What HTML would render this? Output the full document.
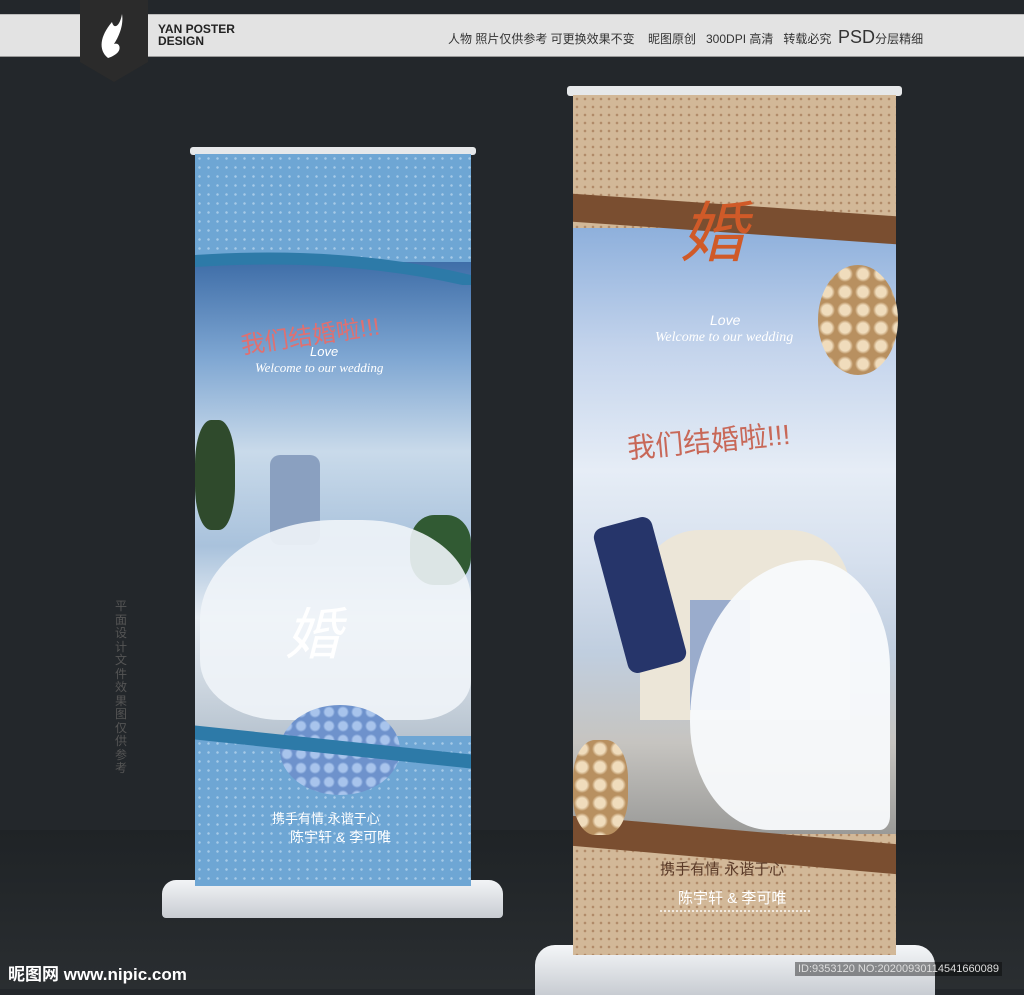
<!DOCTYPE html>
<html><head><meta charset="utf-8"><style>
*{margin:0;padding:0;box-sizing:border-box}
body{width:1024px;height:989px;overflow:hidden;background:#23272b;font-family:"Liberation Sans","Noto Sans CJK SC",sans-serif;position:relative}
.a{position:absolute}
</style></head><body>
<div class="a" style="left:0;top:830px;width:1024px;height:159px;background:linear-gradient(#1f2326,#2a2e31)"></div>
<div class="a" style="left:0;top:14px;width:1024px;height:43px;background:#e3e3e3;border-top:1px solid #bbb;border-bottom:1px solid #999"></div>
<svg class="a" style="left:80px;top:0" width="70" height="84"><polygon points="0,0 68,0 68,62 34,82 0,62" fill="#2b2b2b"/><path d="M28 58c-10-8-8-22 4-36 2 8 8 4 10-8 2 12-4 24-8 30 6-2 8 6 2 10-4 3-8 4-8 4z" fill="#fff"/></svg>
<div class="a" style="left:158px;top:23px;font-size:12px;font-weight:bold;color:#222;line-height:12px">YAN POSTER<br>DESIGN</div>
<div class="a" style="left:448px;top:27px;font-size:12px;color:#333;white-space:nowrap">人物 照片仅供参考 可更换效果不变 &nbsp;&nbsp; 昵图原创 &nbsp;&nbsp;300DPI 高清 &nbsp;&nbsp;转载必究 &nbsp;<span style="font-size:18px">PSD</span>分层精细</div>
<div class="a" style="left:115px;top:600px;width:14px;font-size:12px;line-height:13.5px;color:#555">平面设计文件 效果图仅供参考</div>

<div class="a" style="left:162px;top:880px;width:341px;height:38px;background:linear-gradient(#f2f4f6,#c8ccd2);border-radius:14px 14px 4px 4px"></div>
<div class="a" style="left:190px;top:147px;width:286px;height:8px;background:#e6e8ea;border-radius:3px"></div>
<div class="a" style="left:195px;top:154px;width:276px;height:732px;background:radial-gradient(circle,#a6cae8 1px,#6ea6d4 1.5px) 0 0/9px 9px"></div>
<div class="a" style="left:195px;top:262px;width:276px;height:474px;background:linear-gradient(#3f6ea8 0%,#7ea6d2 20%,#c9daea 40%,#a9c2dc 60%,#e8eef4 75%,#b8c4d0 100%)"></div>
<div class="a" style="left:195px;top:420px;width:40px;height:110px;background:#2f4a2c;border-radius:40%"></div>
<div class="a" style="left:410px;top:515px;width:61px;height:70px;background:#315a33;border-radius:40%"></div>
<div class="a" style="left:270px;top:455px;width:50px;height:90px;background:#8aa0c0;border-radius:10px"></div>
<div class="a" style="left:200px;top:520px;width:271px;height:200px;background:rgba(240,244,248,.9);border-radius:50% 40% 20% 30%"></div>
<div class="a" style="left:240px;top:316px;font-size:24px;color:#e07070;transform:rotate(-8deg);white-space:nowrap">我们结婚啦!!!</div>
<div class="a" style="left:310px;top:344px;font-size:13px;color:#fff;font-style:italic">Love</div>
<div class="a" style="left:255px;top:360px;font-size:13px;color:#fff;font-style:italic;font-family:'Liberation Serif',serif">Welcome to our wedding</div>
<div class="a" style="left:285px;top:590px;font-size:56px;color:#fff;font-style:italic">婚</div>
<div class="a" style="left:280px;top:705px;width:120px;height:90px;background:radial-gradient(circle,#a8c4ec 4px,#6e92cc 6px) 0 0/14px 14px;border-radius:50%"></div>
<div class="a" style="left:195px;top:740px;width:276px;height:14px;background:#2d7aa8;transform:skewY(6deg)"></div>
<svg class="a" style="left:195px;top:235px" width="276" height="50"><path d="M0 20Q150 10 276 40L276 52Q150 22 0 32Z" fill="#2d7aa8"/></svg>
<div class="a" style="left:272px;top:808px;font-size:13px;color:#fff">携手有情 永谐于心</div>
<div class="a" style="left:290px;top:827px;font-size:14px;color:#fff">陈宇轩 &amp; 李可唯</div>

<div class="a" style="left:535px;top:945px;width:400px;height:50px;background:linear-gradient(#f4f6f8,#c8ccd2);border-radius:20px 20px 0 0"></div>
<div class="a" style="left:567px;top:86px;width:335px;height:10px;background:#e6e8ea;border-radius:3px"></div>
<div class="a" style="left:573px;top:95px;width:323px;height:860px;background:radial-gradient(circle,#b08a68 1px,#d2b898 1.6px) 0 0/8px 8px"></div>
<div class="a" style="left:573px;top:228px;width:323px;height:606px;background:linear-gradient(#8eb0dc 0%,#c4d4ec 20%,#e6edf6 40%,#d6e0ee 55%,#c0cedf 70%,#c6c4c0 85%,#9a9a98 100%)"></div>
<div class="a" style="left:640px;top:530px;width:210px;height:190px;background:#ece6d8;border-radius:60px 60px 0 0"></div>
<div class="a" style="left:690px;top:600px;width:60px;height:110px;background:#9aaccc"></div>
<div class="a" style="left:690px;top:560px;width:200px;height:270px;background:rgba(248,250,252,.95);border-radius:60% 40% 5% 40%"></div>
<div class="a" style="left:610px;top:520px;width:60px;height:150px;background:#26356a;transform:rotate(-15deg);border-radius:10px"></div>
<div class="a" style="left:627px;top:420px;font-size:28px;color:#c86858;transform:rotate(-5deg);white-space:nowrap">我们结婚啦!!!</div>
<div class="a" style="left:710px;top:312px;font-size:14px;color:#fff;font-style:italic">Love</div>
<div class="a" style="left:655px;top:330px;font-size:14px;color:#fff;font-style:italic;font-family:'Liberation Serif',serif">Welcome to our wedding</div>
<div class="a" style="left:573px;top:205px;width:323px;height:28px;background:#7a4e30;transform:skewY(4deg)"></div>
<div class="a" style="left:573px;top:830px;width:323px;height:30px;background:#7a4e30;transform:skewY(5deg)"></div>
<div class="a" style="left:680px;top:180px;font-size:66px;color:#d05a28;font-style:italic">婚</div>
<div class="a" style="left:818px;top:265px;width:80px;height:110px;background:radial-gradient(circle,#f0dcbc 5px,#b89060 8px) 0 0/18px 18px;border-radius:50%"></div>
<div class="a" style="left:573px;top:740px;width:55px;height:95px;background:radial-gradient(circle,#f0dcbc 5px,#b89060 8px) 0 0/18px 18px;border-radius:40%"></div>
<div class="a" style="left:660px;top:858px;font-size:15px;color:#5a3a28">携手有情 永谐于心</div>
<div class="a" style="left:678px;top:887px;font-size:15px;color:#fff">陈宇轩 &amp; 李可唯</div>
<div class="a" style="left:660px;top:910px;width:150px;height:22px;border-top:2px dotted #fff;opacity:.7"></div>

<div class="a" style="left:8px;top:960px;font-size:17px;font-weight:bold;color:#fff;white-space:nowrap">昵图网 www.nipic.com</div>
<div class="a" style="left:795px;top:962px;font-size:11px;color:#ddd;background:rgba(0,0,0,.4);padding:1px 3px;white-space:nowrap">ID:9353120 NO:20200930114541660089</div>
</body></html>
